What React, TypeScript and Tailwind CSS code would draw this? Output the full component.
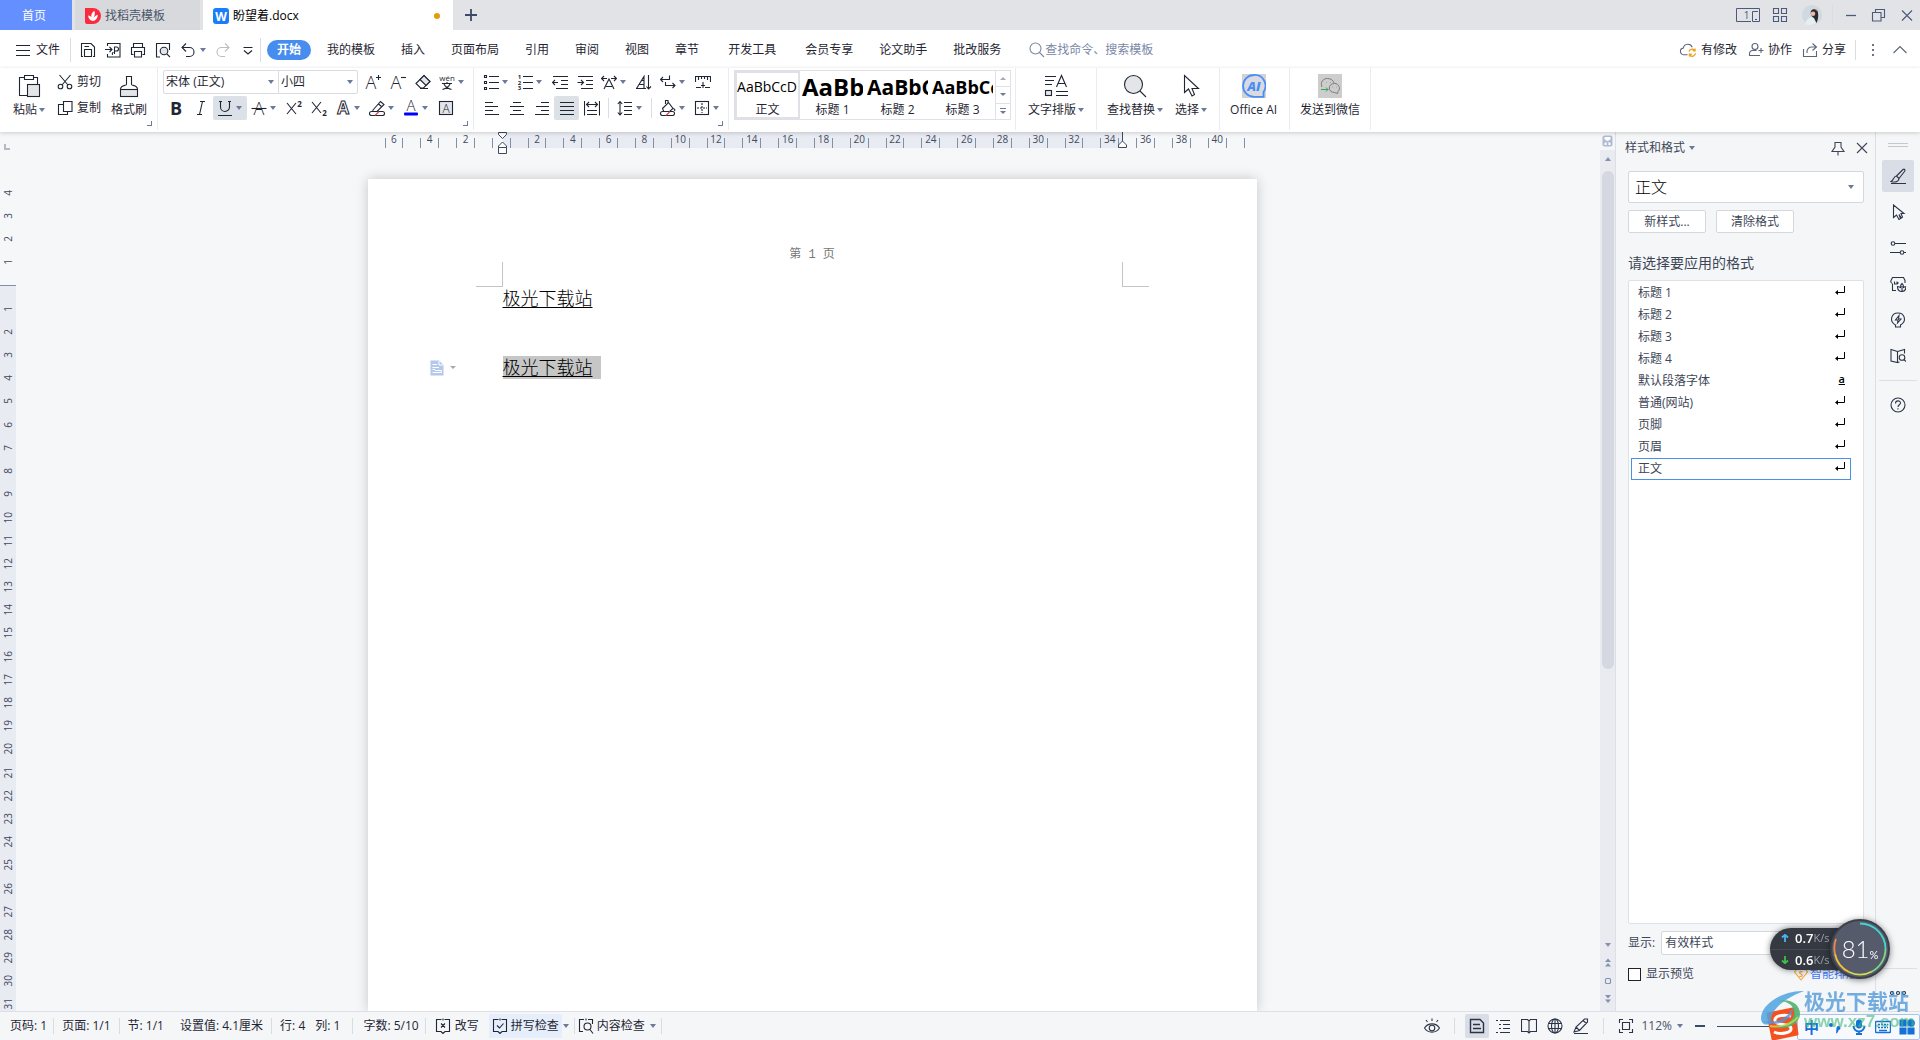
import { useState } from "react";
import type { ReactNode } from "react";

type IconProps = { children: ReactNode; size?: string; box?: number };

function Icon({ children, size = "size-4", box = 16 }: IconProps) {
  return (
    <svg
      viewBox={`0 0 ${box} ${box}`}
      className={`${size} shrink-0`}
      fill="none"
      stroke="currentColor"
      strokeWidth="1.1"
      aria-hidden="true"
    >
      {children}
    </svg>
  );
}

type GlyphProps = { x: number; y: number; s: number; children: string; bold?: boolean };

function Glyph({ x, y, s, children, bold }: GlyphProps) {
  return (
    <text
      x={x}
      y={y}
      fontSize={s}
      fontWeight={bold ? 700 : 300}
      textAnchor="middle"
      fill="currentColor"
      stroke="none"
    >
      {children}
    </text>
  );
}

function Caret() {
  return (
    <span className="inline-block shrink-0 border-x-[3px] border-t-4 border-x-transparent border-t-[#6b7a99]" />
  );
}

function Divider({ className }: { className: string }) {
  return <span className={`w-px shrink-0 bg-[#d9dce2] ${className}`} />;
}

type ToolProps = { label: string; children: ReactNode; caret?: boolean; active?: boolean };

function Tool({ label, children, caret, active }: ToolProps) {
  return (
    <button
      aria-label={label}
      className={`flex h-6 shrink-0 items-center rounded-xs ${
        caret ? "w-[34px] gap-[3px] pl-1" : "w-[25px] justify-center"
      } ${active ? "bg-[#dce0e7]" : ""}`}
    >
      {children}
      {caret && <Caret />}
    </button>
  );
}

type BigProps = { label: string; children: ReactNode; caret?: boolean };

function BigTool({ label, children, caret }: BigProps) {
  return (
    <button className="flex h-[52px] shrink-0 flex-col items-center pt-1">
      {children}
      <span className="flex items-center gap-[2px] leading-6">
        {label}
        {caret && <Caret />}
      </span>
    </button>
  );
}

function Launcher() {
  return (
    <span className="absolute right-[5px] bottom-1 size-[5px] border-r border-b border-[#6b7a99]" />
  );
}

type SelectProps = { label: string; value: string; className: string; caretClass?: string };

function Select({ label, value, className, caretClass = "right-1" }: SelectProps) {
  return (
    <div className={`relative ${className}`}>
      <select aria-label={label} className="size-full appearance-none bg-transparent outline-none">
        <option>{value}</option>
      </select>
      <span className={`pointer-events-none absolute inset-y-0 flex items-center ${caretClass}`}>
        <Caret />
      </span>
    </div>
  );
}

/* ---------- title bar ---------- */

function TitleBar() {
  return (
    <header className="flex h-[30px] shrink-0 items-stretch bg-[#e1e3e7]">
      <button className="w-[72px] bg-[#6490ff] pt-px pr-1 text-white">首页</button>
      <button className="ml-[3px] flex w-[125px] items-center gap-1 bg-[#d8d9dd] pt-px pl-[10px] text-[#4a5567]">
        <svg viewBox="0 0 16 16" className="size-4" aria-hidden="true">
          <path d="M0 0H8A8 8 0 0 1 8 16H2A2 2 0 0 1 0 14Z" fill="#fb2b3f" />
          <path
            d="M7.600 13C5 12.500 3.500 10.500 3 7.500C4.500 7.700 5.600 8.300 6.300 9.200C6 6.500 7 4.400 9.400 2.800C10.300 5.500 9.800 7.500 8.600 9.800C9.700 8.400 11 7.300 12.700 6.800C12.700 10.300 10.800 12.800 7.600 13Z"
            fill="#fff"
          />
        </svg>
        找稻壳模板
      </button>
      <button className="ml-[3px] flex w-[250px] items-center bg-white pt-px pr-[13px] pl-[10px] text-black">
        <svg viewBox="0 0 16 16" className="mr-1 size-4" aria-hidden="true">
          <rect width="16" height="16" rx="3" fill="#1a7dfa" />
          <text x="8" y="12.500" fontSize="12" fontWeight="700" textAnchor="middle" fill="#fff">
            W
          </text>
        </svg>
        盼望着.docx
        <span className="ml-auto size-[6px] rounded-full bg-[#e69b00]" />
      </button>
      <button aria-label="新建" className="ml-3 text-[#3d4a66]">
        <Icon size="size-3" box={12}>
          <path d="M6 0V12M0 6H12" strokeWidth="1.800" />
        </Icon>
      </button>
      <div className="ml-auto flex items-center pr-[5px] text-[#4c5a7a]">
        <svg viewBox="0 0 24 14" className="h-[14px] w-6" fill="none" stroke="currentColor" aria-hidden="true">
          <path d="M15 13.500H0.500V0.500H23.500V13.500H16.500V3.500H22M19 11.500H21" />
          <text x="10.500" y="11" fontSize="10" textAnchor="middle" fill="currentColor" stroke="none">
            1
          </text>
        </svg>
        <button aria-label="应用" className="ml-3">
          <Icon>
            <path d="M1.500 1.500H6.500V6.500H1.500ZM9.500 1.500H14.500V6.500H9.500ZM1.500 9.500H6.500V14.500H1.500ZM9.500 9.500H14.500V14.500H9.500Z" />
          </Icon>
        </button>
        <svg viewBox="0 0 20 20" className="ml-[14px] size-5" aria-hidden="true">
          <circle cx="10" cy="10" r="10" fill="#cfd9df" />
          <path d="M3 19C4 15 7 12 11 12L14 18C11 20.500 6 20.500 3 19Z" fill="#e4eff2" />
          <path d="M9 6C10 3.500 14 3.500 15.500 6C17 10 16 15 14.500 18L12 13C10 12 8 9 9 6Z" fill="#2a2730" />
          <circle cx="11" cy="8.800" r="2.300" fill="#e8b9ac" />
          <path d="M13 5L15 4L16 6Z" fill="#e5a93c" />
        </svg>
        <Divider className="mx-[10px] h-5 bg-[#c6cad3]" />
        <button aria-label="最小化" className="flex size-4 items-center">
          <Icon>
            <path d="M3 8.500H13" strokeWidth="1.300" />
          </Icon>
        </button>
        <button aria-label="还原" className="ml-3">
          <Icon>
            <path d="M1.500 5.500H10V14H1.500ZM4.500 5.500V2.500H13.500V10.500H10" />
          </Icon>
        </button>
        <button aria-label="关闭" className="ml-3">
          <Icon>
            <path d="M3 3.500L13 13.500M13 3.500L3 13.500" />
          </Icon>
        </button>
      </div>
    </header>
  );
}

/* ---------- menu bar ---------- */

const menuGroups = [
  ["我的模板", "插入", "页面布局", "引用", "审阅", "视图", "章节"],
  ["开发工具"],
  ["会员专享", "论文助手", "批改服务"],
];

function MenuBar() {
  return (
    <nav className="flex h-[38px] shrink-0 items-center bg-white pt-px pr-3 pl-4">
      <button className="flex items-center gap-[6px]">
        <Icon size="size-[14px]" box={14}>
          <path d="M0 2.500H14M0 7.500H14M0 12.500H14" />
        </Icon>
        文件
      </button>
      <Divider className="mr-[9px] ml-[10px] h-6" />
      <div className="flex items-center gap-[9px]">
        <button aria-label="保存">
          <Icon>
            <path d="M3 14.500H1.500V1.500H11L14.500 5V14.500H13M4.500 14.500V7.500H11.500V14.500ZM4.500 4.500H9" />
          </Icon>
        </button>
        <button aria-label="输出为PDF">
          <Icon>
            <path d="M2.500 4V1.500H15V15H2.500V12M0 7.500H6.500M4.500 5L7 7.500L4.500 10M8 12.500C7 12.500 7 10.500 8.500 10.500M9.500 12V5H11.500A2 2 0 0 1 11.500 9H9.500" />
          </Icon>
        </button>
        <button aria-label="打印">
          <Icon>
            <path d="M3.500 5.500V1.500H12.500V5.500M3.500 12.500H1.500V5.500H14.500V12.500H12.500M4.500 9.500H11.500V15H4.500Z" />
          </Icon>
        </button>
        <button aria-label="打印预览">
          <Icon>
            <path d="M5 15H1.500V1.500H14.500V8" />
            <circle cx="9" cy="9" r="3.800" fill="#e3e5e9" />
            <path d="M11.800 11.800L15 15" />
          </Icon>
        </button>
        <button aria-label="撤销" className="flex items-center gap-1">
          <Icon>
            <path d="M6 1.500L2 5.500L6 9.500M2 5.500H9.500A4.500 4.500 0 0 1 9.500 14.500H6" />
          </Icon>
          <Caret />
        </button>
        <button aria-label="恢复" className="text-[#b9bdc6]">
          <Icon>
            <path d="M10 1.500L14 5.500L10 9.500M14 5.500H6.500A4.500 4.500 0 0 0 6.500 14.500H10" />
          </Icon>
        </button>
        <button aria-label="自定义快速访问工具栏">
          <Icon>
            <path d="M3.500 5.500H12.500M4 8.500L8 12L12 8.500" />
          </Icon>
        </button>
      </div>
      <Divider className="mr-[6px] ml-1 h-6" />
      <button className="h-5 w-11 rounded-full bg-[#478df0] leading-5 font-bold text-white">开始</button>
      <div className="ml-4 flex gap-[29px]">
        {menuGroups.map((group) => (
          <div key={group[0]} className="flex gap-[26px]">
            {group.map((item) => (
              <button key={item} className="whitespace-nowrap">
                {item}
              </button>
            ))}
          </div>
        ))}
      </div>
      <div className="ml-7 flex items-center text-[#7a88a6]">
        <Icon>
          <circle cx="6.500" cy="6.500" r="5.500" />
          <path d="M10.500 10.500L15 15" />
        </Icon>
        <input
          aria-label="查找"
          placeholder="查找命令、搜索模板"
          className="w-32 bg-transparent outline-none placeholder:text-[#7a88a6]"
        />
      </div>
      <div className="ml-auto flex items-center">
        <button className="flex items-center gap-1">
          <Icon size="h-4 w-[18px]" box={17}>
            <path d="M8 13.500H4.500A3.500 3.500 0 0 1 3.500 6.500A5 5 0 0 1 13 5.500" stroke="#5b6478" />
            <path
              d="M9.500 10A3.500 3.500 0 0 1 15.500 9M16 7V9.500H13.500M16.500 12A3.500 3.500 0 0 1 10.500 14M10 15.500V13H12.500"
              stroke="#f0a020"
              strokeWidth="1.400"
            />
          </Icon>
          有修改
        </button>
        <button className="ml-[11px] flex items-center gap-1">
          <Icon>
            <g stroke="#5b6478">
              <circle cx="7" cy="4.500" r="3" />
              <path d="M12 13.500H1.500V11.500A3 3 0 0 1 4.500 8.500H8.500M13 6V11M10.500 8.500H15.500" />
            </g>
          </Icon>
          协作
        </button>
        <button className="ml-[10px] flex items-center gap-1">
          <Icon>
            <path
              d="M1.500 7V14.500H14.500V9M10.500 1.500L14.500 5L10.500 8.500M14 5H9.500A4.500 4.500 0 0 0 5 9.500V11"
              stroke="#5b6478"
            />
          </Icon>
          分享
        </button>
        <Divider className="mr-[9px] ml-[9px] h-5" />
        <button aria-label="更多">
          <Icon>
            <path d="M7 2H9V4H7ZM7 7H9V9H7ZM7 12H9V14H7Z" fill="#6b7385" stroke="none" />
          </Icon>
        </button>
        <button aria-label="折叠功能区" className="ml-[11px]">
          <Icon>
            <path d="M1.500 11L8 4.500L14.500 11" stroke="#5b6478" />
          </Icon>
        </button>
      </div>
    </nav>
  );
}

/* ---------- ribbon ---------- */

const previews = [
  { label: "正文", sample: "AaBbCcD", size: "text-[14px]", active: true },
  { label: "标题 1", sample: "AaBb", size: "text-[24px] font-bold" },
  { label: "标题 2", sample: "AaBbC", size: "text-[21px] font-bold" },
  { label: "标题 3", sample: "AaBbCc", size: "text-[18px] font-bold" },
];

function ClipboardGroup() {
  return (
    <div className="relative flex h-[62px] border-r border-[#ebecef] pt-[2px] pr-[10px] pl-[13px]">
      <BigTool label="粘贴" caret>
        <Icon size="size-6" box={24}>
          <path d="M7 3.500H2.500V21.500H10M17 3.500H20.500V10M7.500 1.500H16.500V5.500H7.500Z" />
          <rect x="10.500" y="10.500" width="12" height="12" fill="#e3e5e9" />
        </Icon>
      </BigTool>
      <div className="ml-3 flex flex-col gap-[2px]">
        <button className="flex h-6 items-center gap-1">
          <Icon>
            <path d="M2.500 1L11 11M13.500 1L5 11" />
            <circle cx="3.500" cy="12.500" r="2.300" />
            <circle cx="12.500" cy="12.500" r="2.300" />
          </Icon>
          剪切
        </button>
        <button className="flex h-6 items-center gap-1">
          <Icon>
            <path d="M6.500 1.500H15V11.500H6.500ZM6.500 4.500H1.500V14.500H10.500V11.500" />
          </Icon>
          复制
        </button>
      </div>
      <div className="ml-[10px]">
        <BigTool label="格式刷">
          <Icon size="size-6" box={24}>
            <path d="M9.500 10.500V2.500H14.500V10.500C14.500 12 20.500 10.500 20.500 15.500H3.500C3.500 10.500 9.500 12 9.500 10.500Z" />
            <rect x="3.500" y="15.500" width="17" height="7" fill="#e3e5e9" />
          </Icon>
        </BigTool>
      </div>
      <Launcher />
    </div>
  );
}

function FontGroup() {
  return (
    <div className="relative flex h-[62px] flex-col gap-[2px] border-r border-[#ebecef] pt-[2px] pr-1 pl-[5px]">
      <div className="flex">
        <div className="mr-[2px] flex h-6 divide-x divide-[#d9dce2] rounded-xs border border-[#d9dce2]">
          <Select label="字体" value="宋体 (正文)" className="w-[115px] pl-[2px]" />
          <Select label="字号" value="小四" className="w-[78px] pl-[2px]" />
        </div>
        <Tool label="增大字号">
          <Icon>
            <Glyph x={6} y={15} s={18}>A</Glyph>
            <path d="M13.500 1V6M11 3.500H16" />
          </Icon>
        </Tool>
        <Tool label="减小字号">
          <Icon>
            <Glyph x={6} y={15} s={18}>A</Glyph>
            <path d="M11 3.500H16" />
          </Icon>
        </Tool>
        <Tool label="清除格式">
          <Icon>
            <path d="M1 9.500L9 1.500L15 7.500L8.500 14H5.500ZM5 14.500H13" />
            <path d="M5 5.500L11 11.500L15 7.500L9 1.500Z" fill="#e3e5e9" />
          </Icon>
        </Tool>
        <Tool label="拼音指南" caret>
          <Icon>
            <text x="8" y="7" fontSize="8" textAnchor="middle" fill="currentColor" stroke="none">
              wén
            </text>
            <path d="M3 9.500H13M8 8V9.500M5 10C6 12.500 9 14.500 12.500 15.500M11 10C10 12.500 7 14.500 3.500 15.500" />
          </Icon>
        </Tool>
      </div>
      <div className="flex">
        <Tool label="加粗">
          <Icon>
            <Glyph x={8} y={14.5} s={18} bold>B</Glyph>
          </Icon>
        </Tool>
        <Tool label="倾斜">
          <Icon>
            <path d="M7 1.500H12M4 14.500H9M9.500 1.500L6.500 14.500" />
          </Icon>
        </Tool>
        <Tool label="下划线" caret active>
          <Icon>
            <path d="M2 1.500H5M11 1.500H14M3.500 1.500V7A4.500 4.500 0 0 0 12.500 7V1.500M1 15.500H15" />
          </Icon>
        </Tool>
        <Tool label="删除线" caret>
          <Icon>
            <Glyph x={8} y={15} s={18}>A</Glyph>
            <path d="M0.500 8.500H15.500" />
          </Icon>
        </Tool>
        <Tool label="上标">
          <Icon>
            <path d="M1 3L10 14M10 3L1 14" />
            <Glyph x={13.5} y={6.5} s={8} bold>2</Glyph>
          </Icon>
        </Tool>
        <Tool label="下标">
          <Icon>
            <path d="M1 2L10 13M10 2L1 13" />
            <Glyph x={13.5} y={16} s={8} bold>2</Glyph>
          </Icon>
        </Tool>
        <Tool label="文字效果" caret>
          <Icon>
            <text x="8" y="14" fontSize="17" fontWeight="700" textAnchor="middle" fill="#fff" strokeWidth="1">
              A
            </text>
          </Icon>
        </Tool>
        <Tool label="突出显示" caret>
          <Icon>
            <path d="M4 10L11.500 1.500L15 4.500L7.500 12L3.500 12.500ZM9.500 4L13 7" />
            <rect x="0.500" y="11.500" width="15" height="4" rx="2" fill="#fff" />
            <path d="M6 15.500L10 11.500" stroke="#e04040" />
          </Icon>
        </Tool>
        <Tool label="字体颜色" caret>
          <Icon>
            <Glyph x={8} y={11} s={15}>A</Glyph>
            <rect x="1" y="12.500" width="14" height="3" rx="1" fill="#0000ff" stroke="none" />
          </Icon>
        </Tool>
        <Tool label="字符底纹">
          <Icon>
            <rect x="1.500" y="1.500" width="13" height="13" fill="#e3e5e9" />
            <Glyph x={8} y={12.5} s={12}>A</Glyph>
          </Icon>
        </Tool>
      </div>
      <Launcher />
    </div>
  );
}

function ParagraphGroup() {
  return (
    <div className="relative flex h-[62px] flex-col gap-[2px] border-r border-[#ebecef] pt-[2px] pr-1 pl-[5px]">
      <div className="flex">
        <Tool label="项目符号" caret>
          <Icon>
            <path d="M6 2.500H16M6 8.500H16M6 14.500H16" />
            <path d="M1.500 1.500H3.500V3.500H1.500ZM1.500 7.500H3.500V9.500H1.500ZM1.500 13.500H3.500V15.500H1.500Z" />
          </Icon>
        </Tool>
        <Tool label="编号" caret>
          <Icon>
            <path d="M6 2.500H16M6 8.500H16M6 14.500H16" />
            <Glyph x={2.5} y={5} s={6} bold>1</Glyph>
            <Glyph x={2.5} y={10.5} s={6} bold>2</Glyph>
            <Glyph x={2.5} y={16} s={6} bold>3</Glyph>
          </Icon>
        </Tool>
        <Tool label="减少缩进量">
          <Icon>
            <path d="M1 2.500H16M9 6.500H16M9 10.500H16M4 14.500H16M0.500 8.500H6M3 6L0.500 8.500L3 11" />
          </Icon>
        </Tool>
        <Tool label="增加缩进量">
          <Icon>
            <path d="M1 2.500H16M9 6.500H16M9 10.500H16M4 14.500H16M0.500 8.500H6M4 6L6.500 8.500L4 11" />
          </Icon>
        </Tool>
        <Tool label="中文版式" caret>
          <Icon>
            <path d="M3 15L8 5L13 15M5 12.500H11M0.500 4.500H6M3 2L0.500 4.500L3 7M10 4.500H15.500M13 2L15.500 4.500L13 7" />
          </Icon>
        </Tool>
        <Tool label="排序">
          <Icon>
            <path d="M0.500 14.500L8 2.500V14.500M2.500 10.500H8M5 6.500H8M0 14.500H10M12.500 1V15M10.500 12.500L12.500 15L15 12.500" />
          </Icon>
        </Tool>
        <Tool label="显示段落标记" caret>
          <Icon>
            <path d="M9.500 1.500V5.500H0.500M3 3L0.500 5.500L3 8M5.500 8V11.500H15M12.500 9L15 11.500L12.500 14" />
          </Icon>
        </Tool>
        <Tool label="标尺">
          <Icon>
            <path d="M0.500 8V2.500H15.500V8M3.500 3V6M6.500 3V5M9.500 3V5M12.500 3V6M1 13.500H6M10 13.500H15M8 8V14M6 11.500H10" />
          </Icon>
        </Tool>
      </div>
      <div className="flex items-center">
        <Tool label="左对齐">
          <Icon>
            <path d="M1 2.500H9M1 6.500H14M1 10.500H9M1 14.500H15" />
          </Icon>
        </Tool>
        <Tool label="居中对齐">
          <Icon>
            <path d="M4 2.500H12M1 6.500H15M4 10.500H12M1 14.500H15" />
          </Icon>
        </Tool>
        <Tool label="右对齐">
          <Icon>
            <path d="M7 2.500H15M2 6.500H15M7 10.500H15M1 14.500H15" />
          </Icon>
        </Tool>
        <Tool label="两端对齐" active>
          <Icon>
            <path d="M1 2.500H15M1 6.500H15M1 10.500H15M1 14.500H15" />
          </Icon>
        </Tool>
        <Tool label="分散对齐">
          <Icon>
            <path d="M0.500 1V15.500M15.500 1V15.500M3 4.500H13M5 2L2.500 4.500L5 7M11 2L13.500 4.500L11 7M3 10.500H13M3 14.500H13" />
          </Icon>
        </Tool>
        <Divider className="mx-1 h-5" />
        <Tool label="行距" caret>
          <Icon>
            <path d="M7 2.500H15M7 6.500H15M7 10.500H15M7 14.500H15M3 1.500V15M0.800 4L3 1.500L5.200 4M0.800 12.500L3 15L5.200 12.500" />
          </Icon>
        </Tool>
        <Divider className="mx-1 h-5" />
        <Tool label="底纹颜色" caret>
          <Icon>
            <path d="M2.500 8.500L8.500 2.500L13 8.500L9 12H4ZM5.500 4V0.500H8V3M13 8.500C15 9 15 10 14.500 11" />
            <rect x="0.500" y="11.500" width="14" height="4" rx="2" fill="#fff" />
            <path d="M6 15.500L10 11.500" stroke="#e04040" />
          </Icon>
        </Tool>
        <Tool label="边框" caret>
          <Icon>
            <rect x="1.500" y="1.500" width="13" height="13" />
            <path d="M8 3V13M3 8H13" strokeDasharray="2 1" />
          </Icon>
        </Tool>
      </div>
      <Launcher />
    </div>
  );
}

function StyleGallery() {
  return (
    <div className="flex h-[62px] border-r border-[#ebecef] pt-[2px] pr-1 pl-[5px]">
      <div className="flex h-[50px] border border-[#dfe1e6]">
        {previews.map((p) => (
          <button
            key={p.label}
            className={`flex w-[65px] flex-col items-center overflow-hidden border-2 pb-px text-black ${
              p.active ? "border-[#dfe1e6]" : "border-transparent"
            }`}
          >
            <span
              className={`flex h-7 w-full shrink-0 items-center overflow-hidden leading-7 ${p.size}`}
            >
              {p.sample}
            </span>
            <span className="leading-[18px] text-[#1f2633]">{p.label}</span>
          </button>
        ))}
        <div className="flex w-[15px] flex-col divide-y divide-[#dfe1e6] border-l border-[#dfe1e6] text-[#6b7a99]">
          <button aria-label="上一行" className="flex flex-1 items-center justify-center">
            <span className="border-x-[3px] border-b-[3px] border-x-transparent border-b-[#a3abbd]" />
          </button>
          <button aria-label="下一行" className="flex flex-1 items-center justify-center">
            <span className="border-x-[3px] border-t-[3px] border-x-transparent border-t-[#6b7a99]" />
          </button>
          <button aria-label="展开" className="flex flex-1 flex-col items-center justify-center gap-[2px]">
            <span className="h-px w-[6px] bg-[#6b7a99]" />
            <span className="border-x-[3px] border-t-[3px] border-x-transparent border-t-[#6b7a99]" />
          </button>
        </div>
      </div>
    </div>
  );
}

function Ribbon() {
  return (
    <section className="relative z-10 flex h-16 shrink-0 bg-white shadow-[0_1px_4px_rgba(0,0,0,0.18)]">
      <ClipboardGroup />
      <FontGroup />
      <ParagraphGroup />
      <StyleGallery />
      <div className="flex h-[62px] border-r border-[#ebecef] px-3 pt-[2px]">
        <BigTool label="文字排版" caret>
          <Icon size="size-6" box={24}>
            <path d="M1 2.500H12M1 6.500H10M1 10.500H8M12 17.500H24M12 21.500H24M12.500 13L17.500 1.500L22.500 13M14 9.500H21" />
            <rect x="1.500" y="16.500" width="6" height="5" fill="#e3e5e9" />
          </Icon>
        </BigTool>
      </div>
      <div className="flex h-[62px] gap-3 border-r border-[#ebecef] pt-[2px] pr-3 pl-[10px]">
        <BigTool label="查找替换" caret>
          <Icon size="size-6" box={24}>
            <circle cx="10.500" cy="10.500" r="9" fill="#e3e5e9" />
            <path d="M17 17L23 23" />
          </Icon>
        </BigTool>
        <BigTool label="选择" caret>
          <Icon size="size-6" box={24}>
            <path d="M5.500 1.500V18.500L9.500 15L13 22L15.500 20.500L13 14.500H19.500Z" />
          </Icon>
        </BigTool>
      </div>
      <div className="flex h-[62px] border-r border-[#ebecef] pt-[2px] pr-3 pl-[10px]">
        <BigTool label="Office AI">
          <svg viewBox="0 0 24 24" className="size-6" aria-hidden="true">
            <rect width="24" height="24" fill="#d2d2d3" />
            <path
              d="M12 1A10.800 10.800 0 1 0 12 22.800H21.500V18A10.800 10.800 0 0 0 12 1Z"
              fill="#d9dbe0"
              stroke="#4b8df8"
              strokeWidth="1.800"
            />
            <text x="12" y="16.500" fontSize="13" fontWeight="800" fontStyle="italic" textAnchor="middle" fill="#4b8df8">
              AI
            </text>
          </svg>
        </BigTool>
      </div>
      <div className="flex h-[62px] border-r border-[#ebecef] px-[10px] pt-[2px]">
        <BigTool label="发送到微信">
          <svg viewBox="0 0 24 24" className="size-6" fill="none" stroke="#7d7d7d" aria-hidden="true">
            <rect width="24" height="24" fill="#cdcdcd" stroke="none" />
            <path d="M4 13C2 8 5 4.500 9.500 4.500C13 4.500 15.500 6.500 16 9M8 8.500H8.500M12 8.500H12.500" />
            <path d="M16.500 9.500C9.500 9.500 9.500 18.500 16.500 18.500L19.500 19.500L20 17.500C23 14.500 21 9.500 16.500 9.500ZM14.500 13H15M18.500 13H19" />
            <path d="M3 15.500H10M8 13.500L10 15.500L8 17.500" stroke="#2fa84f" />
          </svg>
        </BigTool>
      </div>
    </section>
  );
}

/* ---------- document ---------- */

const rulerMarks = Array.from({ length: 25 }, (_, i) => i * 2 - 6);
const sideMarks = Array.from({ length: 36 }, (_, i) => i - 4);

function SideRuler() {
  return (
    <div className="flex w-6 shrink-0 flex-col overflow-hidden text-[10px] text-[#3f4a5f]">
      <div className="h-[49px] shrink-0 pt-3 pl-1">
        <span className="block size-[6px] border-b-2 border-l-2 border-[#b3b9c7]" />
      </div>
      <div className="flex h-[835px] w-4 shrink-0 flex-col">
        {sideMarks.map((n) =>
          n === 0 ? (
            <div key={n} className="flex flex-1 flex-col justify-end">
              <span className="h-1/2 border-t border-[#8090a8] bg-[#e8ebf1]" />
            </div>
          ) : (
            <div
              key={n}
              className={`flex min-h-0 flex-1 items-center justify-center ${n > 0 ? "bg-[#e8ebf1]" : ""}`}
            >
              <span className="rotate-180 leading-4 [writing-mode:vertical-rl]">{Math.abs(n)}</span>
            </div>
          ),
        )}
      </div>
    </div>
  );
}

function TopRuler() {
  return (
    <div className="relative flex h-4 w-[889px] shrink-0 text-[10px] text-[#3f4a5f]">
      <span className="absolute inset-y-0 right-[135px] left-[135px] bg-[#e8ebf1]" />
      <div className="relative ml-2 flex w-[895px] shrink-0">
        {rulerMarks.map((n) => (
          <div key={n} className="flex flex-1 items-end">
            <span className="ml-[9px] h-[10px] w-px shrink-0 bg-[#8090a8]" />
            {n < 42 && (
              <>
                <span className="flex-1 self-start text-center leading-[14px]">{n === 0 ? "" : Math.abs(n)}</span>
                <span className="mr-[8px] h-[10px] w-px shrink-0 bg-[#8090a8]" />
              </>
            )}
          </div>
        ))}
      </div>
      <svg
        viewBox="0 0 9 22"
        className="absolute top-0 left-[130px] h-[22px] w-[9px]"
        fill="#fff"
        stroke="#3f4a5f"
        aria-hidden="true"
      >
        <path d="M0.500 0.500H8.500V2.500L4.500 6.500L0.500 2.500ZM4.500 10L8.500 14V15.500H0.500V14ZM0.500 15.500H8.500V21.500H0.500Z" />
      </svg>
      <svg
        viewBox="0 0 9 16"
        className="absolute top-0 right-[130px] h-4 w-[9px]"
        fill="#fff"
        stroke="#3f4a5f"
        aria-hidden="true"
      >
        <path d="M4.500 0V9L8.500 13V15.500H0.500V13L4.500 9" />
      </svg>
    </div>
  );
}

function Page() {
  return (
    <article className="mt-[31px] w-[889px] flex-1 bg-white pt-[69px] shadow-[0_0_12px_rgba(0,0,0,0.2)]">
      <p className="text-center font-['Liberation_Mono','Noto_Sans_CJK_SC',monospace] leading-[14px] text-[#777]">
        第 1 页
      </p>
      <div className="flex justify-between px-[108px]">
        <span className="h-[25px] w-[27px] border-r border-b border-[#c4c4c4]" />
        <span className="h-[25px] w-[27px] border-b border-l border-[#c4c4c4]" />
      </div>
      <div className="relative flex flex-col items-start pl-[135px] text-[18px] leading-[23px] font-light text-black">
        <p className="underline underline-offset-2">极光下载站</p>
        <div className="h-[46px]" />
        <p className="bg-[#c6c6c6] pr-2">
          <span className="underline underline-offset-2">极光下载站</span>
        </p>
        <button aria-label="段落布局" className="absolute bottom-0 left-[62px] flex h-[23px] items-center gap-[6px]">
          <svg viewBox="0 0 14 16" className="h-4 w-[14px]" aria-hidden="true">
            <path d="M0.500 0.500H9L13.500 5V15.500H0.500Z" fill="#b3c8ea" />
            <path d="M2.500 4.500H7M2.500 7.500H9M2.500 9.500H5M5 10.500H11.500V12.500H2.500" stroke="#fff" fill="none" />
            <path d="M9 1V5H13" stroke="#fff" fill="none" />
          </svg>
          <span className="border-x-[3px] border-t-[3px] border-x-transparent border-t-[#a3a8b3]" />
        </button>
      </div>
    </article>
  );
}

function ScrollBar() {
  return (
    <div className="flex w-[15px] shrink-0 flex-col items-center bg-[#e9ebf1] text-[#8492b0]">
      <div className="flex h-[18px] w-full shrink-0 items-center justify-center bg-[#f5f6f8]">
        <Icon size="size-3" box={12}>
          <rect x="0.500" y="0.500" width="10" height="11" rx="2" fill="#b0bad0" stroke="none" />
          <path d="M2.500 2H8.500V4.500L5.500 6L2.500 4.500ZM2.500 10V8L4.500 7V10ZM8.500 10V8L6.500 7V10Z" fill="#fff" stroke="none" />
        </Icon>
      </div>
      <span className="mt-[7px] border-x-[3px] border-b-4 border-x-transparent border-b-[#8492b0]" />
      <span className="mt-[10px] h-[498px] w-3 rounded-full bg-[#d5d8e0]" />
      <div className="mt-auto mb-[6px] flex flex-col items-center gap-[6px]">
        <Icon size="size-3" box={12}>
          <path d="M3 4H9L6 8Z" fill="currentColor" stroke="none" />
        </Icon>
        <Icon size="size-3" box={12}>
          <path d="M6 1.500L9 5H3ZM6 6L9 9.500H3Z" fill="currentColor" stroke="none" />
        </Icon>
        <Icon size="size-3" box={12}>
          <rect x="3.500" y="3.500" width="5" height="5" rx="1" />
        </Icon>
        <Icon size="size-3" box={12}>
          <path d="M3 2H9L6 5.500ZM3 6.500H9L6 10Z" fill="currentColor" stroke="none" />
        </Icon>
      </div>
    </div>
  );
}

/* ---------- style pane ---------- */

const styles = ["标题 1", "标题 2", "标题 3", "标题 4", "默认段落字体", "普通(网站)", "页脚", "页眉", "正文"];

function StylePane() {
  const [current, setCurrent] = useState("正文");

  return (
    <aside className="flex w-[261px] shrink-0 flex-col border-x border-[#dcdfe5] bg-[#f5f6f8] pr-[11px] pl-3 text-[#3d4657]">
      <div className="flex h-[31px] shrink-0 items-center">
        <button className="-ml-[3px] flex items-center gap-1">
          样式和格式
          <Caret />
        </button>
        <button aria-label="固定" className="ml-auto">
          <Icon>
            <path d="M5 2.500H11V7L14 11.500H2L5 7ZM8 11.500V15.500" />
          </Icon>
        </button>
        <button aria-label="关闭" className="ml-2 -mr-[6px]">
          <Icon>
            <path d="M3 3L13 13M13 3L3 13" />
          </Icon>
        </button>
      </div>
      <Select
        label="当前样式"
        value={current}
        className="mt-2 h-8 shrink-0 rounded-xs border border-[#d3d7de] bg-white pr-1 pl-[6px] text-[16px] font-light text-black"
        caretClass="right-[9px]"
      />
      <div className="mt-[7px] flex gap-[10px]">
        <button className="h-[23px] w-[78px] rounded-xs border border-[#d3d7de] bg-white">新样式...</button>
        <button className="h-[23px] w-[78px] rounded-xs border border-[#d3d7de] bg-white">清除格式</button>
      </div>
      <h2 className="mt-5 text-[14px] leading-5">请选择要应用的格式</h2>
      <ul className="mt-[7px] flex-1 rounded-xs border border-[#dfe1e6] bg-white pt-px pr-3 pl-[2px]">
        {styles.map((name) => (
          <li key={name}>
            <button
              onClick={() => setCurrent(name)}
              className={`flex h-[22px] w-full items-center justify-between border pr-[5px] pl-[6px] ${
                current === name ? "border-[#4a90e8]" : "border-transparent"
              }`}
            >
              {name}
              {name === "默认段落字体" ? (
                <span className="mb-1 text-[11px] leading-3 font-semibold text-black underline">a</span>
              ) : (
                <svg viewBox="0 0 10 10" className="mb-1 size-[10px]" fill="none" stroke="#000" aria-hidden="true">
                  <path d="M9.500 0V6.500H2" />
                  <path d="M0 6.500L3 4V9Z" fill="#000" stroke="none" />
                </svg>
              )}
            </button>
          </li>
        ))}
      </ul>
      <div className="mt-[7px] flex items-center gap-[6px]">
        <span className="shrink-0">显示:</span>
        <Select
          label="显示"
          value="有效样式"
          className="h-6 flex-1 rounded-xs border border-[#d3d7de] bg-white pl-[3px]"
        />
      </div>
      <div className="mt-2 mb-[26px] flex h-[22px] items-center">
        <label className="flex items-center gap-[5px]">
          <input type="checkbox" className="size-[13px] appearance-none border border-[#222] bg-white" />
          显示预览
        </label>
        <a href="#" className="mr-[6px] ml-auto flex items-center gap-[2px] text-[#3e7bfa]">
          <Icon size="size-[14px]" box={14}>
            <path d="M3.500 1H10.500L13.500 5L7 13L0.500 5Z" stroke="#f0a63a" />
            <text x="7" y="9.500" fontSize="8" fontWeight="700" textAnchor="middle" fill="#f0a63a" stroke="none">
              S
            </text>
          </Icon>
          智能排版
        </a>
      </div>
    </aside>
  );
}

function SideTools() {
  return (
    <div className="flex w-11 shrink-0 flex-col items-center bg-[#f5f6f8] pt-[11px] text-[#2b3446]">
      <span className="h-1 w-5 border-y border-[#c3c7cf]" />
      <div className="mt-[13px] flex flex-col gap-1">
        <button aria-label="样式" className="flex size-8 items-center justify-center rounded-xs bg-[#d9dde6]">
          <Icon>
            <path d="M6.500 8L13 1.500C14.500 0.500 15.500 2 14.500 3.500L9 10.500ZM6.500 8C3.500 8 4 12 1 13.500C4 14.500 8.500 14.500 9 10.500ZM1 15.500H16" />
          </Icon>
        </button>
        <button aria-label="选择窗格" className="flex size-8 items-center justify-center">
          <Icon>
            <path d="M3.500 1V13.500L6.500 11L9 15.500L10.500 14.500L9 10.500L11.500 14L12.500 13L11 9.500H14Z" />
          </Icon>
        </button>
        <button aria-label="属性" className="flex size-8 items-center justify-center">
          <Icon>
            <circle cx="3" cy="3.500" r="1.800" />
            <circle cx="12" cy="12.500" r="1.800" />
            <path d="M5 3.500H16M0 12.500H10M14 12.500H16" />
          </Icon>
        </button>
        <button aria-label="模板" className="flex size-8 items-center justify-center">
          <Icon>
            <path d="M6 14.500H2.500V8M2.500 7.500C1 7 0.500 6 1 4.500L2.500 1.500H13.500L15 4.500V7M4.500 5.500V8H7V5.500M7 8L8.500 6.500" />
            <path
              d="M12 15.500C9 15.500 7.500 13.500 7.500 10.500C9 10.500 10 11 10.500 12C10.300 10 10.800 8.500 12 7.500C13.300 8.500 13.700 10 13.500 12C14 11 15 10.500 16 10.500C16 13.500 14.500 15.500 12 15.500ZM12 10V15"
            />
          </Icon>
        </button>
        <button aria-label="灵感" className="flex size-8 items-center justify-center">
          <Icon>
            <path d="M5.500 13C-1 9.500 1 1 8 1C15 1 17 9.500 10.500 13V15H5.500ZM9 3.500L5.500 8H8L7.500 11L11 7H8.500Z" />
          </Icon>
        </button>
        <button aria-label="检索" className="flex size-8 items-center justify-center">
          <Icon>
            <path d="M7.500 3.500L1 1.500V13L7.500 14.500ZM7.500 3.500L14.500 1.500V5.500M7.500 14.500L9.500 14" />
            <circle cx="12" cy="9.500" r="2.800" />
            <path d="M14 11.500L16 13.500" />
          </Icon>
        </button>
      </div>
      <span className="mt-2 h-px w-[38px] bg-[#dcdfe5]" />
      <button aria-label="帮助" className="mt-4">
        <Icon>
          <circle cx="8" cy="8" r="7" />
          <path d="M5.500 6.500C5.500 3 10.500 3.200 10.500 6C10.500 7.800 8 7.800 8 10M8 11.300V12.500" />
        </Icon>
      </button>
      <span className="mt-auto h-px w-[38px] bg-[#dcdfe5]" />
      <button aria-label="更多" className="mt-4 mb-[10px]">
        <Icon>
          <circle cx="2" cy="8" r="1.500" />
          <circle cx="8" cy="8" r="1.500" />
          <circle cx="14" cy="8" r="1.500" />
        </Icon>
      </button>
    </div>
  );
}

/* ---------- status bar ---------- */

function StatusBar() {
  return (
    <footer className="flex h-[29px] shrink-0 items-center border-t border-[#dcdfe5] bg-[#f5f6f8] pr-[123px] pl-[10px] whitespace-nowrap">
      <span>页码: 1</span>
      <Divider className="mr-2 ml-[6px] h-4" />
      <span>页面: 1/1</span>
      <Divider className="mx-2 h-4" />
      <span>节: 1/1</span>
      <span className="ml-4">设置值: 4.1厘米</span>
      <Divider className="mx-2 h-4" />
      <span>行: 4</span>
      <span className="ml-[10px]">列: 1</span>
      <Divider className="mr-[10px] ml-3 h-4" />
      <span>字数: 5/10</span>
      <Divider className="mr-[9px] ml-[6px] h-4" />
      <button className="flex items-center gap-1">
        <Icon>
          <path d="M6.500 1.500H1.500V13.500H6L8 15.500L10 13.500H14.500V1.500H9.500M8 0.500V2.500M6 5.500L10 9.500M10 5.500L6 9.500" />
        </Icon>
        改写
      </button>
      <button className="ml-[10px] flex h-6 items-center gap-[3px] bg-[#e6eefb] px-[3px]">
        <Icon>
          <path d="M6.500 1.500H1.500V13.500H6L8 15.500L10 13.500H14.500V1.500H9.500M8 0.500V2.500M5 7.500L7.500 10L11.500 5.500" />
        </Icon>
        拼写检查
      </button>
      <span className="ml-px flex">
        <Caret />
      </span>
      <Divider className="mr-[3px] ml-[5px] h-4" />
      <button className="flex items-center gap-[3px]">
        <Icon>
          <path d="M6 1.500H1.500V13.500H5M10 1.500H14.500V6M8 0.500V2.500" />
          <circle cx="9.500" cy="8.500" r="3.500" />
          <path d="M12 11.500L15 15.500" />
        </Icon>
        内容检查
        <span className="ml-[2px] flex">
          <Caret />
        </span>
      </button>
      <Divider className="ml-[5px] h-4" />

      <div className="ml-auto flex items-center text-[#2b3446]">
        <button aria-label="护眼模式" className="flex size-6 items-center justify-center">
          <Icon>
            <path d="M0.500 10C4 4.500 12 4.500 15.500 10C12 15.500 4 15.500 0.500 10ZM8 0.500V3M2 2L3.500 4M14 2L12.500 4" />
            <circle cx="8" cy="10" r="2.800" />
          </Icon>
        </button>
        <Divider className="mx-[10px] h-4" />
        <div className="flex gap-[2px]">
          <button aria-label="页面视图" className="flex size-6 items-center justify-center rounded-xs bg-[#d9dde6]">
            <Icon>
              <path d="M1.500 1.500H11L14.500 5V14.500H1.500ZM4 6.500H11M4 10.500H12" strokeWidth="1.400" />
            </Icon>
          </button>
          <button aria-label="大纲" className="flex size-6 items-center justify-center">
            <Icon>
              <path d="M1 2.500H3M5 2.500H15M4 6.500H6M8 6.500H15M4 10.500H6M8 10.500H15M1 14.500H3M5 14.500H15" />
            </Icon>
          </button>
          <button aria-label="阅读版式" className="flex size-6 items-center justify-center">
            <Icon>
              <path d="M8 3L6.500 1.500H0.500V13.500H6.500L8 15L9.500 13.500H15.500V1.500H9.500ZM8 3V15" />
            </Icon>
          </button>
          <button aria-label="Web版式" className="flex size-6 items-center justify-center">
            <Icon>
              <circle cx="8" cy="8" r="7" />
              <ellipse cx="8" cy="8" rx="3.500" ry="7" />
              <path d="M1.500 5.500H14.500M1.500 10.500H14.500M8 1V15" />
            </Icon>
          </button>
          <button aria-label="写作模式" className="flex size-6 items-center justify-center">
            <Icon>
              <path d="M1 14L3 9L11.500 1H14.500V4L6.500 12.500ZM3 9L6.500 12.500M10 2.500L13.500 5.500M1 15.500H15" />
            </Icon>
          </button>
        </div>
        <Divider className="mx-[10px] h-4" />
        <button aria-label="最佳显示比例" className="flex size-6 items-center justify-center">
          <Icon>
            <path d="M1.500 5V1.500H5M11 1.500H14.500V5M14.500 11V14.500H11M5 14.500H1.500V11M4.500 4.500H11.500V11.500H4.500Z" />
          </Icon>
        </button>
        <button className="ml-[3px] flex items-center gap-[5px] text-[#4a5567]">
          112%
          <Caret />
        </button>
        <button aria-label="缩小" className="ml-3">
          <span className="block h-[2px] w-[10px] bg-[#3d4a66]" />
        </button>
        <input
          type="range"
          aria-label="显示比例"
          className="ml-3 h-px w-20 appearance-none bg-[#3d4a66] [&::-webkit-slider-thumb]:appearance-none"
        />
      </div>
    </footer>
  );
}

/* ---------- things floating over the window ---------- */

function InputMethodBar() {
  return (
    <div className="fixed right-0 bottom-0 z-20 flex h-[26px] w-[123px] items-center justify-between rounded-xs border border-[#a9c3ea] bg-[#f7f9fd] pr-1 pl-[6px] text-[#1471d8]">
      <span className="text-[15px] font-bold">中</span>
      <Icon>
        <circle cx="4" cy="6" r="2" fill="currentColor" stroke="none" />
        <path d="M9.500 9A2 2 0 1 1 11.500 11C11.500 13 10.500 14 9 14.500" fill="currentColor" stroke="none" />
      </Icon>
      <Icon>
        <rect x="5" y="0.500" width="6" height="9" rx="3" fill="currentColor" stroke="none" />
        <path d="M2.500 7A5.500 5.500 0 0 0 13.500 7M8 12.500V15.500M5 15H11" strokeWidth="2" />
      </Icon>
      <Icon>
        <rect x="0.500" y="2.500" width="15" height="11" rx="1" strokeWidth="1.500" />
        <path d="M3 5.500H13M3 8.500H13" strokeDasharray="2 1" strokeWidth="1.500" />
        <path d="M4 11.500H12" strokeWidth="1.500" />
      </Icon>
      <Icon>
        <path d="M1 1H7V7H1ZM9 9H15V15H9ZM1 9H7V15H1Z" fill="currentColor" />
        <circle cx="12" cy="4" r="3.300" fill="currentColor" />
      </Icon>
    </div>
  );
}

function Watermark() {
  return (
    <div className="pointer-events-none fixed right-0 bottom-0 z-30 flex w-40">
      <svg viewBox="0 0 44 50" className="h-[50px] w-11 shrink-0" aria-hidden="true">
        <path d="M8 24L33 19L37 44L13 49Z" fill="#f4511e" stroke="#f4511e" strokeWidth="3" strokeLinejoin="round" />
        <path d="M31 26C22 24 14 26 15 31C16 36 30 33 31 38C32 43 20 45 14 42" fill="none" stroke="#fff" strokeWidth="3" />
        <path d="M44 1C26 0 2 12 1 28C1 35 7 36 12 33C8 24 20 10 44 1Z" fill="#4da3e0" opacity="0.850" />
        <path d="M18 11C30 8 40 14 40 24C40 33 28 40 16 38C28 35 35 29 34 21C33 14 26 11 18 11Z" fill="#4fb36f" opacity="0.900" />
        <path d="M3 31C16 34 28 28 33 17C34 29 18 39 3 31Z" fill="#5b8fd6" opacity="0.800" />
        <path d="M10 36C20 38 32 34 38 27" fill="none" stroke="#c8dc50" strokeWidth="2" opacity="0.800" />
      </svg>
      <div>
        <p className="text-[21px] leading-[22px] font-bold whitespace-nowrap text-[#3c8fd6] opacity-70">极光下载站</p>
        <p className="font-['Liberation_Sans',sans-serif] text-[17px] leading-5 font-bold text-[#3fb87a] opacity-60">
          www.xz7.com
        </p>
      </div>
    </div>
  );
}

function SpeedBall() {
  return (
    <div className="fixed right-[30px] bottom-[61px] z-20 flex items-center">
      <div className="-mr-8 flex h-[42px] w-[92px] flex-col rounded-l-full bg-[#343942] text-[13px] font-semibold text-white shadow-[0_0_6px_rgba(0,0,0,0.5)]">
        <span className="flex flex-1 items-center border-b border-[#454b55] pl-[11px] leading-5">
          <svg viewBox="0 0 8 8" className="mr-[6px] size-2" aria-hidden="true">
            <path d="M4 0.500V8M1 3.500L4 0.800L7 3.500" stroke="#4ab2f5" strokeWidth="1.800" fill="none" />
          </svg>
          0.7<span className="text-[11px] font-normal text-[#9a9fa8]">K/s</span>
        </span>
        <span className="flex flex-1 items-center pl-[11px] leading-5">
          <svg viewBox="0 0 8 8" className="mr-[6px] size-2" aria-hidden="true">
            <path d="M4 0V7.500M1 4.500L4 7.200L7 4.500" stroke="#3fbf4a" strokeWidth="1.800" fill="none" />
          </svg>
          0.6<span className="text-[11px] font-normal text-[#9a9fa8]">K/s</span>
        </span>
      </div>
      <div className="relative flex size-[60px] items-center justify-center rounded-full border-2 border-[#3c404a] bg-[#565b6b] shadow-[0_1px_6px_rgba(0,0,0,0.5)]">
        <svg viewBox="0 0 56 56" className="absolute inset-0 size-14" fill="none" strokeWidth="1.800" aria-hidden="true">
          <path d="M28 2.500A25.500 25.500 0 0 1 53.500 28" stroke="#3fd6d0" />
          <path d="M53.500 28A25.500 25.500 0 0 1 40 50.500" stroke="#7fd98a" />
          <path d="M40 50.500A25.500 25.500 0 0 1 17 51" stroke="#cfd957" />
          <path d="M17 51A25.500 25.500 0 0 1 3 33" stroke="#f0c23c" />
          <path d="M3 33A25.500 25.500 0 0 1 4 18" stroke="#f08a4a" />
        </svg>
        <span className="font-['Lato',sans-serif] text-[24px] font-light text-white">81</span>
        <span className="mt-3 font-['Lato',sans-serif] text-[11px] text-white">%</span>
      </div>
    </div>
  );
}

export default function App() {
  return (
    <div className="flex h-screen flex-col overflow-hidden bg-[#f5f7f9] font-['Open_Sans','Noto_Sans_CJK_SC',sans-serif] text-[12px] leading-4 text-[#1f2633]">
      <TitleBar />
      <MenuBar />
      <Ribbon />
      <main className="flex min-h-0 flex-1">
        <SideRuler />
        <div className="flex min-w-0 flex-1 flex-col items-center overflow-hidden">
          <TopRuler />
          <Page />
        </div>
        <ScrollBar />
        <StylePane />
        <SideTools />
      </main>
      <StatusBar />
      <SpeedBall />
      <InputMethodBar />
      <Watermark />
    </div>
  );
}
